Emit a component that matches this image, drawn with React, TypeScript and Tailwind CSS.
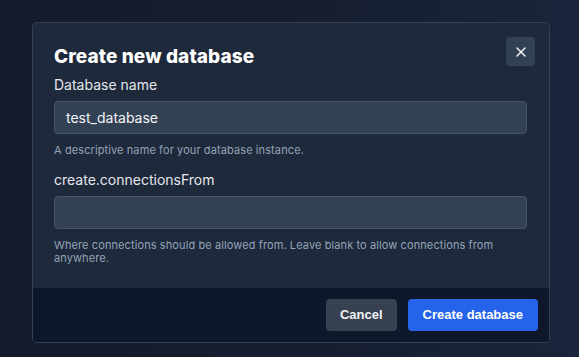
import { X } from "lucide-react";

function Field({
  label,
  value,
  help,
}: {
  label: string;
  value: string;
  help: string;
}) {
  return (
    <div className="flex flex-col">
      <label className="text-[14px] leading-5 text-gray-200">{label}</label>
      <input
        readOnly
        value={value}
        className="mt-[6px] h-[33px] w-full rounded-[4px] border border-[#475569] bg-[#334155] px-[11px] text-[14px] text-gray-100 outline-none"
      />
      <p className="mt-[10px] text-[11px] leading-[13px] tracking-[0.1px] text-[#94a3b8]">
        {help}
      </p>
    </div>
  );
}

export default function App() {
  return (
    <div
      className="flex h-[357px] w-[579px] items-start bg-gradient-to-r from-[#151b2a] via-[#161d2e] to-[#19253c] pl-[32px] pt-[22px]"
      style={{ fontFamily: "Inter, 'Noto Sans', sans-serif" }}
    >
      <div className="relative w-[518px] overflow-hidden rounded-[5px] border border-[#334155] bg-[#1e293b]">
        <button
          type="button"
          className="absolute right-[14px] top-[14px] grid h-[29px] w-[29px] place-items-center rounded-[4px] bg-[#334155] text-gray-100"
        >
          <X className="h-4 w-4" strokeWidth={2.2} />
        </button>

        <div className="pb-[23px] pl-[21px] pr-[22px] pt-[20px]">
          <h1 className="text-[19px] font-extrabold leading-7 tracking-[0.1px] text-white">
            Create new database
          </h1>
          <div className="mt-[4px] flex flex-col gap-[13px]">
            <Field
              label="Database name"
              value="test_database"
              help="A descriptive name for your database instance."
            />
            <Field
              label="create.connectionsFrom"
              value=""
              help="Where connections should be allowed from. Leave blank to allow connections from anywhere."
            />
          </div>
        </div>

        <div
          className="flex justify-end gap-[11px] bg-[#0f172a] py-[11px] pr-[11px]"
          style={{ fontFamily: "'Liberation Sans', Arial, sans-serif" }}
        >
          <button
            type="button"
            className="h-[32px] rounded-[4px] bg-[#374151] px-[14px] text-[13px] font-bold text-gray-100"
          >
            Cancel
          </button>
          <button
            type="button"
            className="h-[32px] rounded-[4px] bg-[#2563eb] px-[15px] text-[13px] font-bold text-white"
          >
            Create database
          </button>
        </div>
      </div>
    </div>
  );
}
